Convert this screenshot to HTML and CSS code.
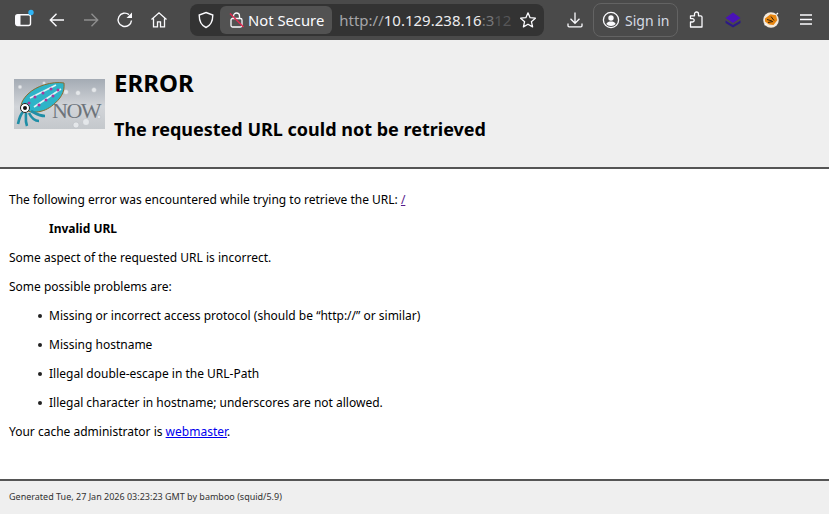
FILE: index.html
```html
<!DOCTYPE html>
<html lang="en">
<head>
<meta charset="UTF-8">
<title>ERROR: The requested URL could not be retrieved</title>
<link rel="stylesheet" href="styles.css">
</head>
<body>

<div class="toolbar">
  <div class="tool tabs">
    <svg width="18" height="18" viewBox="0 0 18 18"><rect x="1.700" y="3.700" width="14.800" height="10.800" rx="2" fill="none" stroke="#fbfbfe" stroke-width="1.400"/><path d="M2 4h4.500v10H2z" fill="#fbfbfe"/><circle cx="17" cy="1.500" r="2.700" fill="#2fb4f5"/></svg>
  </div>
  <div class="tool back">
    <svg width="18" height="18" viewBox="0 0 18 18"><path d="M16 9H2.500M8.500 2.800 2.300 9l6.200 6.200" fill="none" stroke="#fbfbfe" stroke-width="1.400"/></svg>
  </div>
  <div class="tool forward">
    <svg width="18" height="18" viewBox="0 0 18 18"><path d="M2 9h13.500M9.500 2.800 15.700 9l-6.200 6.200" fill="none" stroke="#8e8e8e" stroke-width="1.400"/></svg>
  </div>
  <div class="tool reload">
    <svg width="18" height="18" viewBox="0 0 18 18"><path d="M15.500 9.500A6.700 6.700 0 1 1 13 3.600" fill="none" stroke="#fbfbfe" stroke-width="1.400"/><path d="M16 1.500v5.500h-5.500z" fill="#fbfbfe"/></svg>
  </div>
  <div class="tool home">
    <svg width="18" height="18" viewBox="0 0 18 18"><path d="M1.500 8.500 9 1.800l7.500 6.700M3.500 7.500v8.300h4v-5h3v5h4V7.500" fill="none" stroke="#fbfbfe" stroke-width="1.300"/></svg>
  </div>

  <div class="urlbar">
    <svg class="shield" width="18" height="18" viewBox="0 0 18 18"><path d="M9 1.500 15.800 4c0 6-1.500 10.200-6.800 12.500C3.700 14.200 2.200 10 2.200 4z" fill="none" stroke="#fbfbfe" stroke-width="1.400"/></svg>
    <div class="secure">
      <svg width="16" height="18" viewBox="0 0 16 18"><rect x="2" y="7.500" width="11" height="8.500" rx="1.500" fill="none" stroke="#fbfbfe" stroke-width="1.300"/><path d="M4.500 7.500V5a3 3 0 0 1 6 0v2.500" fill="none" stroke="#fbfbfe" stroke-width="1.300"/><path d="M1 2.500 14.500 16" stroke="#e22850" stroke-width="1.400"/></svg>
      <span>Not Secure</span>
    </div>
    <div class="address"><span class="dim">http://</span>10.129.238.16<span class="port">:3</span><span class="port-end">12</span></div>
    <svg class="star" width="18" height="18" viewBox="0 0 18 18"><path d="M9 1.800 11.100 6.700 16.400 7.200 12.400 10.700 13.600 15.900 9 13.200 4.400 15.900 5.600 10.700 1.600 7.200 6.900 6.700z" fill="none" stroke="#fbfbfe" stroke-width="1.300" stroke-linejoin="round"/></svg>
  </div>

  <div class="tool download">
    <svg width="18" height="18" viewBox="0 0 18 18"><path d="M8 1.500v10.500M3.500 7.800 8 12.300l4.500-4.500M1 12.500v2.200c0 .7.500 1.100 1.100 1.100h11.800c.6 0 1.100-.4 1.100-1.100v-2.200" fill="none" stroke="#fbfbfe" stroke-width="1.300"/></svg>
  </div>
  <div class="signin">
    <svg width="18" height="18" viewBox="0 0 18 18"><circle cx="9" cy="9" r="7.600" fill="none" stroke="#fbfbfe" stroke-width="1.300"/><circle cx="9" cy="7" r="2.700" fill="#fbfbfe"/><path d="M4.300 13c1-1.800 2.600-2.400 4.700-2.400s3.700.6 4.700 2.400C12.500 14.300 11 15 9 15s-3.500-.7-4.700-2z" fill="#fbfbfe"/></svg>
    <span>Sign in</span>
  </div>
  <div class="tool puzzle">
    <svg width="18" height="18" viewBox="0 0 18 18"><path d="M2.500 16V11h2a1.700 1.700 0 0 0 0-3.400h-2V4.800h4V3a2 2 0 0 1 4 0v1.800h2.200a1.300 1.300 0 0 1 1.300 1.300V16z" fill="none" stroke="#fbfbfe" stroke-width="1.300" stroke-linejoin="round"/></svg>
  </div>
  <div class="tool ext-purple">
    <svg width="18" height="18" viewBox="0 0 18 18"><path d="M1.500 9.500 9 14l7.500-4.500V12L9 16.500 1.500 12z" fill="#2c1a86"/><path d="M9 1.500 16.500 7 9 12 1.500 7z" fill="#4a12b8"/></svg>
  </div>
  <div class="tool ext-orange">
    <svg width="18" height="18" viewBox="0 0 18 18"><circle cx="9" cy="9" r="7.800" fill="#f3e9dc"/><path d="M3 7.500 8.500 3.200l5.500 1 1.300 5-3.800 4.800-4.500-.6L3 10.500z" fill="#e8860f"/><path d="M5 8.500l5 1.500M9 5.500l3 4M6 11.500l5-1" stroke="#33210c" stroke-width="1"/><path d="M14.500 3.500 16 2M2.500 14l2-1" stroke="#fff" stroke-width="1.200"/></svg>
  </div>
  <div class="tool menu">
    <svg width="18" height="18" viewBox="0 0 18 18"><path d="M3 4h12M3 8.500h12M3 13h12" stroke="#fbfbfe" stroke-width="1.400"/></svg>
  </div>
</div>

<div class="page-header">
  <svg class="logo" width="91" height="50" viewBox="0 0 91 50">
    <defs>
      <linearGradient id="sky" x1="0" y1="0" x2="0" y2="1">
        <stop offset="0" stop-color="#a4abb4"/>
        <stop offset="0.55" stop-color="#d2d5d9"/>
        <stop offset="1" stop-color="#c4c8cc"/>
      </linearGradient>
    </defs>
    <rect width="91" height="50" fill="url(#sky)"/>
    <g fill="#e4e7ea" stroke="#b4b9bf" stroke-width="0.500">
      <circle cx="6" cy="8" r="2"/>
      <circle cx="52" cy="13" r="2.500"/>
      <circle cx="64" cy="14" r="2.500"/>
      <circle cx="80" cy="11" r="2.500"/>
      <circle cx="72" cy="43" r="3.500"/>
      <circle cx="85" cy="38" r="1.800"/>
      <circle cx="62" cy="46" r="3"/>
      <circle cx="30" cy="4" r="1.500"/>
    </g>
    <path d="M50 4C38 2 22 7 14 15 9 20 7 24 7 28 15 36 30 34 39 26 46 20 51 14 50 4z" fill="#2eb4c8" stroke="#8a6c2c" stroke-width="1"/>
    <path d="M16 19l26-13M20 28l27-18" stroke="#dff4f6" stroke-width="1.600"/>
    <g fill="#a8389e">
      <circle cx="15" cy="24" r="1.500"/>
      <circle cx="21" cy="18" r="1.500"/>
      <circle cx="25" cy="26" r="1.500"/>
      <circle cx="29" cy="14" r="1.500"/>
      <circle cx="32" cy="21" r="1.500"/>
      <circle cx="37" cy="10" r="1.500"/>
      <circle cx="39" cy="17" r="1.500"/>
      <circle cx="44" cy="11" r="1.500"/>
    </g>
    <path d="M9 33c-3 3-4 7-5 12M12 34c0 4-1 8 1 13M15 34c2 4 5 8 10 8M17 32c4 2 8 5 14 5" fill="none" stroke="#1f8ea6" stroke-width="2.600"/>
    <circle cx="11" cy="29" r="4.500" fill="#fff" stroke="#222" stroke-width="1"/>
    <circle cx="11" cy="29" r="2" fill="#111"/>
    <text class="logo-text" x="38" y="39">NOW</text>
  </svg>
  <div class="titles">
    <h1>ERROR</h1>
    <h2>The requested URL could not be retrieved</h2>
  </div>
</div>

<div class="content">
  <p>The following error was encountered while trying to retrieve the URL: <a class="visited" href="#">/</a></p>
  <blockquote><b>Invalid URL</b></blockquote>
  <p>Some aspect of the requested URL is incorrect.</p>
  <p>Some possible problems are:</p>
  <ul>
    <li>Missing or incorrect access protocol (should be “http://” or similar)</li>
    <li>Missing hostname</li>
    <li>Illegal double-escape in the URL-Path</li>
    <li>Illegal character in hostname; underscores are not allowed.</li>
  </ul>
  <p>Your cache administrator is <a href="#">webmaster</a>.</p>
</div>

<div class="footer">Generated Tue, 27 Jan 2026 03:23:23 GMT by bamboo (squid/5.9)</div>

</body>
</html>
```

FILE: styles.css
```css
* {
  box-sizing: border-box;
}

html, body {
  height: 100%;
}

body {
  margin: 0;
  display: flex;
  flex-direction: column;
  overflow: hidden;
  font-family: "Noto Sans", sans-serif;
  font-size: 12px;
  color: #000;
  background: #fff;
}

/* browser toolbar */
.toolbar {
  display: flex;
  align-items: center;
  height: 40px;
  flex-shrink: 0;
  padding-left: 6px;
  background: #4a4a4a;
  color: #fbfbfe;
}

.tool {
  display: flex;
  align-items: center;
  justify-content: center;
  width: 34px;
  height: 32px;
  flex-shrink: 0;
}

.tool svg {
  overflow: visible;
}

.urlbar {
  display: flex;
  align-items: center;
  width: 354px;
  height: 32px;
  margin: 0 15px 0 14px;
  padding: 0 7px;
  border-radius: 8px;
  background: #333;
  overflow: hidden;
}

.shield {
  flex-shrink: 0;
}

.secure {
  display: flex;
  align-items: center;
  gap: 3px;
  height: 28px;
  margin-left: 5px;
  padding: 0 8px 0 9px;
  border-radius: 6px;
  background: #525252;
  font-size: 14.8px;
  white-space: nowrap;
}

.address {
  flex: 1;
  margin-left: 7px;
  font-size: 15px;
  color: #ececee;
  white-space: nowrap;
  overflow: hidden;
}

.dim {
  color: #a5a5a8;
}

.port {
  color: #77777a;
}

.port-end {
  color: #565658;
}

.star {
  flex-shrink: 0;
}

.signin {
  display: flex;
  align-items: center;
  gap: 5px;
  width: 85px;
  height: 34px;
  flex-shrink: 0;
  padding-left: 8px;
  border: 1px solid #636363;
  border-radius: 8px;
  font-size: 14px;
  color: #d6dbe4;
}

.puzzle {
  margin-left: 2px;
}

.ext-purple, .ext-orange {
  width: 37px;
}

.ext-orange {
  margin-left: 1px;
}

/* squid error page */
.page-header {
  display: flex;
  align-items: flex-start;
  height: 129px;
  flex-shrink: 0;
  padding: 28px 0 0 14px;
  background: #efefef;
  border-bottom: 2px solid #555;
}

.logo {
  flex-shrink: 0;
  margin-top: 11px;
}

.titles {
  margin-left: 9px;
}

h1 {
  margin: 0;
  font-size: 24px;
  line-height: 30px;
  font-weight: 700;
}

h2 {
  margin: 19px 0 0;
  font-size: 18px;
  line-height: 24px;
  font-weight: 700;
}

.content {
  flex: 1;
  padding: 22px 9px 0;
}

p {
  margin: 0 0 12px;
  line-height: 17px;
}

blockquote {
  margin: 0 40px 12px;
  line-height: 17px;
}

ul {
  margin: 0 0 12px;
  padding-left: 40px;
  list-style: none;
}

li {
  margin-bottom: 12px;
  line-height: 17px;
}

li::before {
  content: "";
  display: inline-block;
  width: 4px;
  height: 4px;
  margin-left: -11px;
  margin-right: 7px;
  border-radius: 50%;
  background: #222;
  vertical-align: 2px;
}

li:last-child {
  margin-bottom: 0;
}

a {
  color: #00e;
}

a.visited {
  color: #551a8b;
}

.footer {
  height: 35px;
  flex-shrink: 0;
  padding: 9px 9px 0;
  background: #efefef;
  border-top: 2px solid #555;
  font-size: 9px;
  line-height: 14px;
  color: #333;
}

.logo-text {
  font-family: "Liberation Serif", serif;
  font-size: 22px;
  fill: #6d747b;
  letter-spacing: -1.5px;
}
```
